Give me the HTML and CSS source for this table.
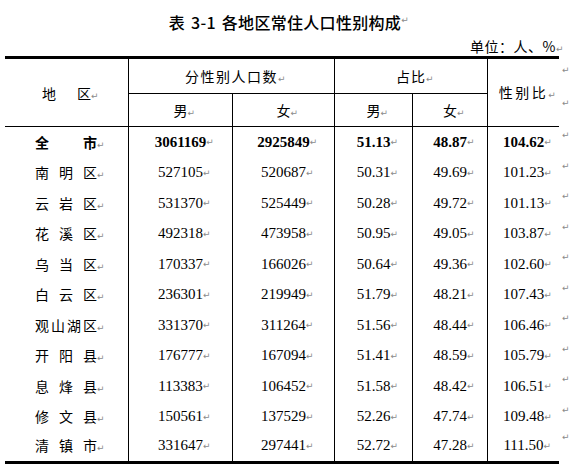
FILE: index.html
```html
<!DOCTYPE html>
<html lang="zh-CN">
<head>
<meta charset="utf-8">
<title>表 3-1 各地区常住人口性别构成</title>
<link rel="stylesheet" href="styles.css">
</head>
<body>
<div class="page">
  <div class="title">表 3-1 各地区常住人口性别构成<span class="pm sup">↵</span></div>
  <div class="unit">单位：人、%<span class="pm">↵</span></div>
  <div class="grid">
    <div class="cell top hb2 area span-r"><span class="hd">地<span class="wide">区</span><span class="pm">↵</span></span></div>
    <div class="cell top hb1 bl span-c"><span class="hd ls15">分性别人口数<span class="pm">↵</span></span></div>
    <div class="cell top hb1 bl span-c"><span class="hd ls1">占比<span class="pm">↵</span></span></div>
    <div class="cell top hb2 bl span-r"><span class="hd ls25">性别比<span class="pm">↵</span></span></div>
    <div class="rm rm1"><span class="pm">↵</span></div>
    <div class="cell hb2 bl"><span class="hd">男<span class="pm">↵</span></span></div>
    <div class="cell hb2 bl"><span class="hd">女<span class="pm">↵</span></span></div>
    <div class="cell hb2 bl"><span class="hd">男<span class="pm">↵</span></span></div>
    <div class="cell hb2 bl"><span class="hd">女<span class="pm">↵</span></span></div>
    <div class="rm rm2"><span class="pm">↵</span></div>

    <div class="cell name bold"><span class="nm"><span>全</span><span>市<span class="pm">↵</span></span></span></div>
    <div class="cell bl num bold">3061169<span class="pm">↵</span></div>
    <div class="cell bl num bold">2925849<span class="pm">↵</span></div>
    <div class="cell bl num bold">51.13<span class="pm">↵</span></div>
    <div class="cell bl num bold">48.87<span class="pm">↵</span></div>
    <div class="cell bl num bold">104.62<span class="pm">↵</span></div>
    <div class="rm"><span class="pm">↵</span></div>

    <div class="cell name"><span class="nm"><span>南</span><span>明</span><span>区<span class="pm">↵</span></span></span></div>
    <div class="cell bl num">527105<span class="pm">↵</span></div>
    <div class="cell bl num">520687<span class="pm">↵</span></div>
    <div class="cell bl num">50.31<span class="pm">↵</span></div>
    <div class="cell bl num">49.69<span class="pm">↵</span></div>
    <div class="cell bl num">101.23<span class="pm">↵</span></div>
    <div class="rm"><span class="pm">↵</span></div>

    <div class="cell name"><span class="nm"><span>云</span><span>岩</span><span>区<span class="pm">↵</span></span></span></div>
    <div class="cell bl num">531370<span class="pm">↵</span></div>
    <div class="cell bl num">525449<span class="pm">↵</span></div>
    <div class="cell bl num">50.28<span class="pm">↵</span></div>
    <div class="cell bl num">49.72<span class="pm">↵</span></div>
    <div class="cell bl num">101.13<span class="pm">↵</span></div>
    <div class="rm"><span class="pm">↵</span></div>

    <div class="cell name"><span class="nm"><span>花</span><span>溪</span><span>区<span class="pm">↵</span></span></span></div>
    <div class="cell bl num">492318<span class="pm">↵</span></div>
    <div class="cell bl num">473958<span class="pm">↵</span></div>
    <div class="cell bl num">50.95<span class="pm">↵</span></div>
    <div class="cell bl num">49.05<span class="pm">↵</span></div>
    <div class="cell bl num">103.87<span class="pm">↵</span></div>
    <div class="rm"><span class="pm">↵</span></div>

    <div class="cell name"><span class="nm"><span>乌</span><span>当</span><span>区<span class="pm">↵</span></span></span></div>
    <div class="cell bl num">170337<span class="pm">↵</span></div>
    <div class="cell bl num">166026<span class="pm">↵</span></div>
    <div class="cell bl num">50.64<span class="pm">↵</span></div>
    <div class="cell bl num">49.36<span class="pm">↵</span></div>
    <div class="cell bl num">102.60<span class="pm">↵</span></div>
    <div class="rm"><span class="pm">↵</span></div>

    <div class="cell name"><span class="nm"><span>白</span><span>云</span><span>区<span class="pm">↵</span></span></span></div>
    <div class="cell bl num">236301<span class="pm">↵</span></div>
    <div class="cell bl num">219949<span class="pm">↵</span></div>
    <div class="cell bl num">51.79<span class="pm">↵</span></div>
    <div class="cell bl num">48.21<span class="pm">↵</span></div>
    <div class="cell bl num">107.43<span class="pm">↵</span></div>
    <div class="rm"><span class="pm">↵</span></div>

    <div class="cell name"><span class="nm"><span>观</span><span>山</span><span>湖</span><span>区<span class="pm">↵</span></span></span></div>
    <div class="cell bl num">331370<span class="pm">↵</span></div>
    <div class="cell bl num">311264<span class="pm">↵</span></div>
    <div class="cell bl num">51.56<span class="pm">↵</span></div>
    <div class="cell bl num">48.44<span class="pm">↵</span></div>
    <div class="cell bl num">106.46<span class="pm">↵</span></div>
    <div class="rm"><span class="pm">↵</span></div>

    <div class="cell name"><span class="nm"><span>开</span><span>阳</span><span>县<span class="pm">↵</span></span></span></div>
    <div class="cell bl num">176777<span class="pm">↵</span></div>
    <div class="cell bl num">167094<span class="pm">↵</span></div>
    <div class="cell bl num">51.41<span class="pm">↵</span></div>
    <div class="cell bl num">48.59<span class="pm">↵</span></div>
    <div class="cell bl num">105.79<span class="pm">↵</span></div>
    <div class="rm"><span class="pm">↵</span></div>

    <div class="cell name"><span class="nm"><span>息</span><span>烽</span><span>县<span class="pm">↵</span></span></span></div>
    <div class="cell bl num">113383<span class="pm">↵</span></div>
    <div class="cell bl num">106452<span class="pm">↵</span></div>
    <div class="cell bl num">51.58<span class="pm">↵</span></div>
    <div class="cell bl num">48.42<span class="pm">↵</span></div>
    <div class="cell bl num">106.51<span class="pm">↵</span></div>
    <div class="rm"><span class="pm">↵</span></div>

    <div class="cell name"><span class="nm"><span>修</span><span>文</span><span>县<span class="pm">↵</span></span></span></div>
    <div class="cell bl num">150561<span class="pm">↵</span></div>
    <div class="cell bl num">137529<span class="pm">↵</span></div>
    <div class="cell bl num">52.26<span class="pm">↵</span></div>
    <div class="cell bl num">47.74<span class="pm">↵</span></div>
    <div class="cell bl num">109.48<span class="pm">↵</span></div>
    <div class="rm"><span class="pm">↵</span></div>

    <div class="cell name last"><span class="nm"><span>清</span><span>镇</span><span>市<span class="pm">↵</span></span></span></div>
    <div class="cell bl num last">331647<span class="pm">↵</span></div>
    <div class="cell bl num last">297441<span class="pm">↵</span></div>
    <div class="cell bl num last">52.72<span class="pm">↵</span></div>
    <div class="cell bl num last">47.28<span class="pm">↵</span></div>
    <div class="cell bl num last">111.50<span class="pm">↵</span></div>
    <div class="rm rml"><span class="pm">↵</span></div>
  </div>
</div>
</body>
</html>
```
FILE: styles.css
```css
html, body {
  margin: 0;
  padding: 0;
  background: #fff;
}
body {
  color: #000;
  font-family: "Noto Sans CJK SC", sans-serif;
}
.page {
  width: 554px;
  margin-left: 5px;
}
.title {
  padding-top: 12px;
  height: 20px;
  line-height: 20px;
  font-size: 16px;
  font-weight: 500;
  text-align: center;
  white-space: nowrap;
  padding-left: 6px;
  letter-spacing: 0.3px;
  word-spacing: 2px;
}
.unit {
  margin-top: 6px;
  height: 16px;
  line-height: 16px;
  font-size: 14px;
  text-align: right;
  padding-right: 3px;
  white-space: nowrap;
  letter-spacing: 0.5px;
}
.pm {
  display: inline-block;
  width: 0;
  font-family: "DejaVu Sans", sans-serif;
  font-size: 9px;
  font-weight: normal;
  color: #8a8a8a;
  white-space: nowrap;
  line-height: 10px;
  letter-spacing: 0;
  word-spacing: 0;
}
.pm.sup {
  vertical-align: 6px;
}
.grid {
  margin-top: 2px;
  display: grid;
  grid-template-columns: 123px 104px 102px 78px 75px 72px 25px;
  grid-template-rows: 38px 33px repeat(10, 30.5px) 32px;
}
.cell {
  box-sizing: border-box;
  display: flex;
  align-items: center;
  justify-content: center;
  white-space: nowrap;
}
.top { border-top: 3px solid #000; }
.hb1 { border-bottom: 1px solid #000; }
.hb2 { border-bottom: 1px solid #000; }
.bl { border-left: 1px solid #000; }
.last {
  border-bottom: 3px solid #000;
  padding-bottom: 2px;
}
.span-r { grid-row: span 2; }
.span-c { grid-column: span 2; }
.hd {
  font-size: 14px;
  line-height: 1;
}
.ls1 { letter-spacing: 1px; }
.ls15 { letter-spacing: 1.5px; }
.ls25 { letter-spacing: 2.5px; }
.wide { margin-left: 21px; }
.area { padding-top: 1px; }
.name {
  justify-content: flex-start;
  padding-left: 30px;
}
.nm {
  display: flex;
  width: 62px;
  justify-content: space-between;
  font-size: 14px;
  line-height: 1;
}
.num {
  font-family: "Liberation Serif", serif;
  font-size: 15px;
  line-height: 1;
}
.bold { font-weight: bold; }
.rm {
  box-sizing: border-box;
  display: flex;
  align-items: flex-start;
  padding-left: 3px;
  padding-top: 3px;
}
.rm1 { padding-top: 9px; }
.rm2 { padding-top: 4px; }
.rml { padding-top: 0; }
```
